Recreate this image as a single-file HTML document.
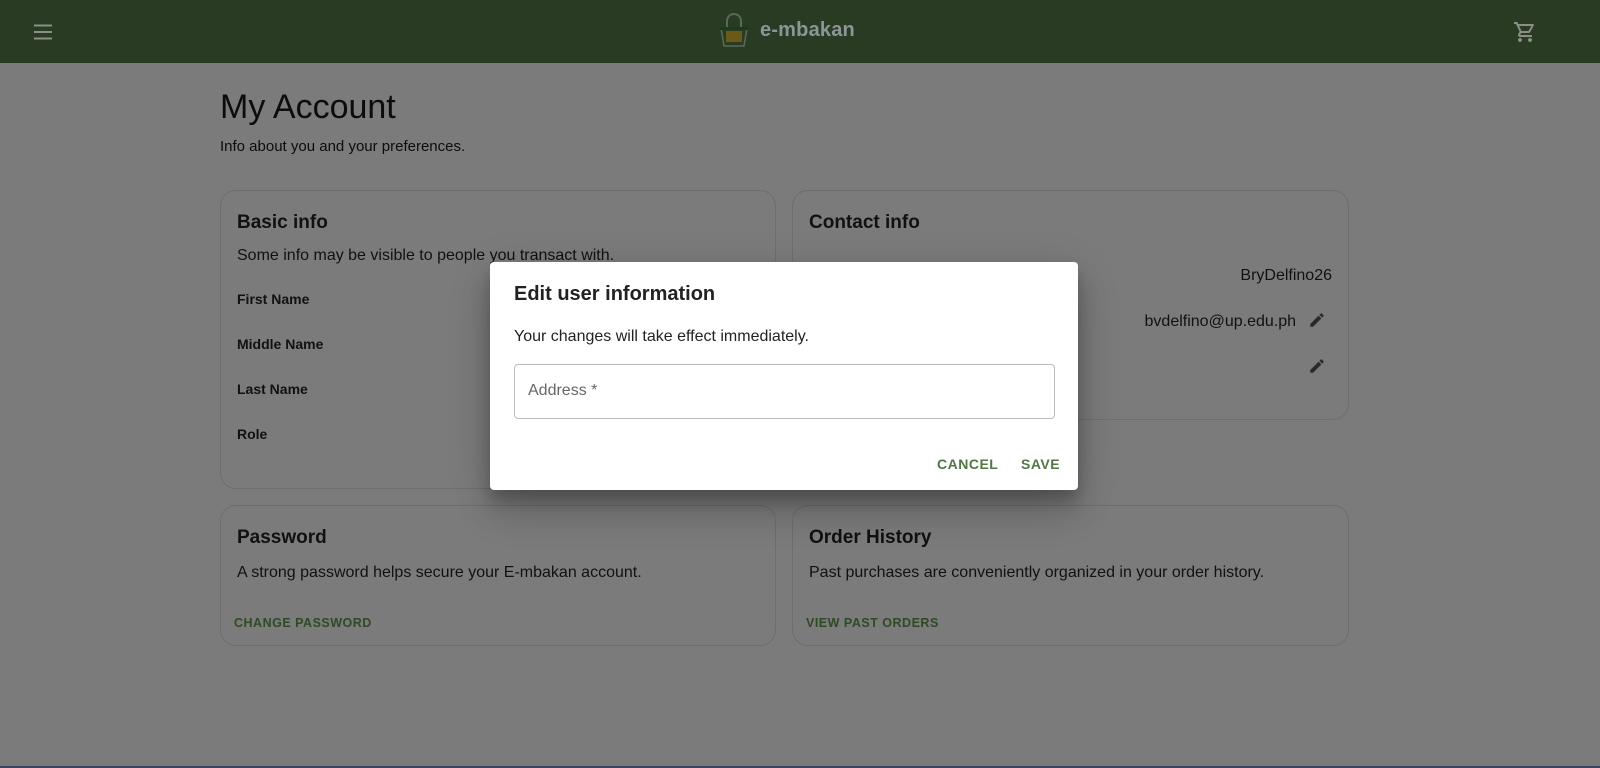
<!DOCTYPE html>
<html><head><meta charset="utf-8"><style>
*{box-sizing:border-box;margin:0;padding:0}
body{width:1600px;height:768px;overflow:hidden;background:#7b7b7b;font-family:"Liberation Sans",Arial,sans-serif;color:#111;position:relative}
.hdr{position:absolute;left:0;top:0;width:1600px;height:63px;background:#293b22}
.logo{position:absolute;left:718px;top:12px;display:flex;align-items:center}
.logo span{color:#8c9598;font-size:20px;font-weight:bold;margin-left:10px;letter-spacing:.2px}
h1{position:absolute;left:220px;top:88px;font-size:34px;font-weight:normal;color:#0c0c0c}
.sub{position:absolute;left:220px;top:138px;font-size:15px;color:#0c0c0c}
.card{position:absolute;background:#7b7b7b;border:1px solid #6e6e6e;border-radius:16px}
.card h2{position:absolute;left:16px;top:21px;font-size:19px;font-weight:bold;color:#111}
.card p{position:absolute;left:16px;font-size:16px;color:#111}
.lbl{position:absolute;left:16px;font-size:14px;font-weight:bold;color:#111}
.btn{position:absolute;left:13px;font-size:12.5px;font-weight:bold;color:#2f4a26;letter-spacing:.5px}
.dlg{position:absolute;left:490px;top:262px;width:588px;height:228px;background:#fff;border-radius:4px;box-shadow:0 11px 15px rgba(0,0,0,.2),0 24px 38px rgba(0,0,0,.14),0 9px 46px rgba(0,0,0,.12)}
.dlg h3{position:absolute;left:24px;top:21px;font-size:20px;font-weight:bold;color:#222}
.dlg .t{position:absolute;left:24px;top:66px;font-size:16px;color:#222}
.inp{position:absolute;left:24px;top:102px;width:541px;height:55px;border:1px solid #bbb;border-radius:4px}
.inp span{position:absolute;left:13px;top:17px;font-size:16px;color:#666}
.db{position:absolute;top:194px;font-size:14px;font-weight:bold;color:#527644;letter-spacing:.5px}
.bot{position:absolute;left:0;top:766px;width:1600px;height:2px;background:#3a4560}
</style></head><body>
<div class="hdr">
<svg style="position:absolute;left:33px;top:24px" width="20" height="16" viewBox="0 0 20 16"><path d="M1 1.5h18M1 8h18M1 14.5h18" stroke="#8a8f88" stroke-width="2"/></svg>
<div class="logo"><svg width="32" height="36" viewBox="0 0 32 36"><path d="M9 15V9a7 7 0 0 1 14 0v6" fill="none" stroke="#5a6a58" stroke-width="2"/><path d="M3 16h26l-3 18H6z" fill="none" stroke="#5a6a58" stroke-width="1.5"/><rect x="8" y="19" width="16" height="11" fill="#6a5a18"/><path d="M2 15h28v3H2z" fill="#1f3a16"/></svg><span>e-mbakan</span></div>
<svg style="position:absolute;left:1513px;top:20px" width="24" height="24" viewBox="0 0 24 24"><path fill="#8a8f88" d="M7 18c-1.1 0-2 .9-2 2s.9 2 2 2 2-.9 2-2-.9-2-2-2zM1 2v2h2l3.6 7.6-1.4 2.4c-.1.3-.2.6-.2 1 0 1.1.9 2 2 2h12v-2H7.4c-.1 0-.2-.1-.2-.2v-.1l.9-1.7h7.4c.8 0 1.4-.4 1.700-1l3.6-6.5c.1-.2.2-.3.2-.5 0-.6-.5-1-1-1H5.2l-.9-2H1zm16 16c-1.1 0-2 .9-2 2s.9 2 2 2 2-.9 2-2-.9-2-2-2zM6.2 6h12.1l-2.8 5H8.5z"/></svg>
</div>
<h1>My Account</h1>
<div class="sub">Info about you and your preferences.</div>
<div class="card" style="left:220px;top:190px;width:556px;height:299px">
<h2>Basic info</h2><p style="top:56px">Some info may be visible to people you transact with.</p>
<div class="lbl" style="top:100px">First Name</div><div class="lbl" style="top:145px">Middle Name</div><div class="lbl" style="top:190px">Last Name</div><div class="lbl" style="top:235px">Role</div>
</div>
<div class="card" style="left:792px;top:190px;width:557px;height:230px">
<h2>Contact info</h2>
<p style="top:76px;left:auto;right:16px">BryDelfino26</p>
<p style="top:122px;left:auto;right:52px">bvdelfino@up.edu.ph</p>
<svg style="position:absolute;left:515px;top:120px" width="18" height="18" viewBox="0 0 24 24"><path fill="#2a2a2a" d="M3 17.25V21h3.75L17.81 9.94l-3.75-3.75zM20.71 7.04a1 1 0 0 0 0-1.41l-2.34-2.34a1 1 0 0 0-1.41 0l-1.83 1.830 3.75 3.75z"/></svg>
<svg style="position:absolute;left:515px;top:166px" width="18" height="18" viewBox="0 0 24 24"><path fill="#2a2a2a" d="M3 17.25V21h3.75L17.81 9.94l-3.75-3.75zM20.71 7.04a1 1 0 0 0 0-1.41l-2.34-2.34a1 1 0 0 0-1.41 0l-1.83 1.83 3.75 3.75z"/></svg>
</div>
<div class="card" style="left:220px;top:505px;width:556px;height:141px">
<h2>Password</h2><p style="top:58px">A strong password helps secure your E-mbakan account.</p><div class="btn" style="top:110px">CHANGE PASSWORD</div></div>
<div class="card" style="left:792px;top:505px;width:557px;height:141px">
<h2>Order History</h2><p style="top:58px">Past purchases are conveniently organized in your order history.</p><div class="btn" style="top:110px">VIEW PAST ORDERS</div></div>
<div class="dlg"><h3>Edit user information</h3><div class="t">Your changes will take effect immediately.</div>
<div class="inp"><span>Address *</span></div>
<div class="db" style="left:447px">CANCEL</div><div class="db" style="left:531px">SAVE</div></div>
<div class="bot"></div>
</body></html>
